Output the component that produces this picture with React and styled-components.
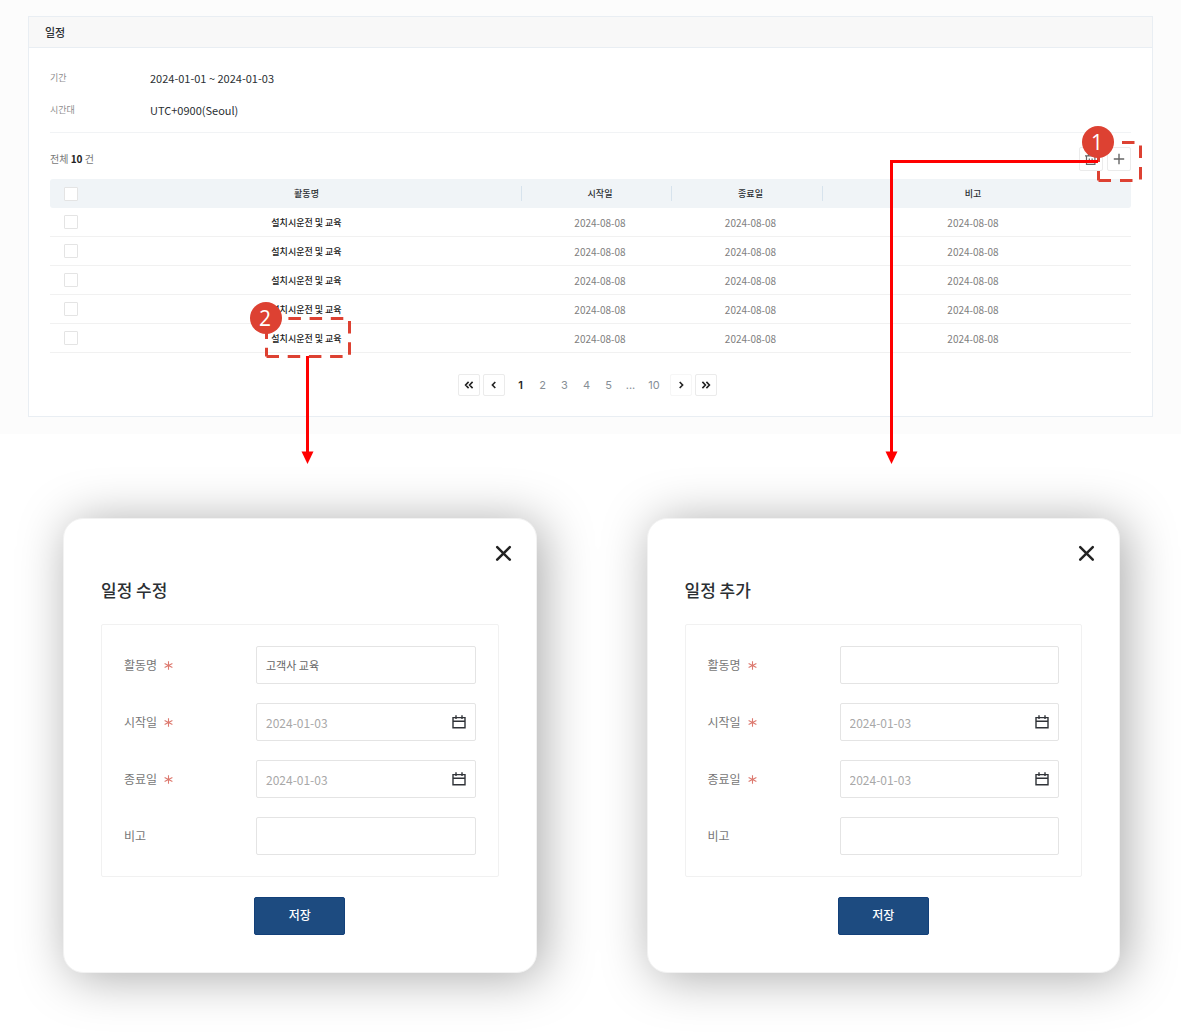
import React, { useId } from "react";
import styled, { createGlobalStyle } from "styled-components";

const GlobalStyle = createGlobalStyle`
  *, *::before, *::after { box-sizing: border-box; }
  body {
    margin: 0;
    background: #fff;
    color: #2b2f33;
    font-family: "Noto Sans CJK KR", sans-serif;
    font-size: 12px;
  }
  button, input { font: inherit; color: inherit; }
`;

const Page = styled.main`
  position: relative;
  padding-bottom: 60px;
  overflow: hidden;
`;

const Board = styled.div`
  margin-right: 5px;
  padding: 16px 28px 17px;
  background: #fcfcfc;
`;

const Panel = styled.section`
  border: 1px solid #e9eef3;
  background: #fff;
`;

const PanelTitle = styled.h1`
  margin: 0;
  padding: 0 16px;
  border-bottom: 1px solid #e9eef3;
  background: #f8f8f8;
  font-size: 11px;
  font-weight: 500;
  line-height: 30px;
`;

const PanelBody = styled.div`
  padding: 0 21px 20px;
`;

const InfoList = styled.dl`
  display: grid;
  grid-template-columns: 100px 1fr;
  margin: 0;
  padding: 14px 0 6px;
  border-bottom: 1px solid #f1f3f5;
  line-height: 32px;
`;

const InfoTerm = styled.dt`
  color: #8e8e8e;
  font-size: 9px;
`;

const InfoValue = styled.dd`
  margin: 0;
  font-size: 11px;
`;

const Toolbar = styled.div`
  display: flex;
  align-items: center;
  justify-content: space-between;
  padding: 14px 0 8px;
`;

const Total = styled.p`
  margin: 0;
  color: #777;
  font-size: 10px;
  line-height: 22px;

  strong {
    color: #222;
    font-weight: 700;
  }
`;

const ToolButtons = styled.div`
  display: flex;
  gap: 4px;
`;

const SquareButton = styled.button`
  display: flex;
  align-items: center;
  justify-content: center;
  width: ${(p) => p.$size}px;
  height: ${(p) => p.$size}px;
  padding: 0;
  border: 1px solid ${(p) => (p.$faint ? "#f6f6f6" : "#ebebeb")};
  border-radius: 2px;
  background: #fff;
  color: ${(p) => p.$color || "#222"};
`;

const Table = styled.table`
  width: 100%;
  border-collapse: separate;
  border-spacing: 0;
  table-layout: fixed;
  font-size: 10px;
  text-align: center;
`;

const HeadCell = styled.th`
  width: ${(p) => p.$width || "auto"};
  height: 29px;
  padding: 0 ${(p) => (p.$last ? "7px" : "0")} 0 ${(p) => (p.$shift ? "8px" : "0")};
  background: ${(p) =>
      p.$divided
        ? "linear-gradient(#d7e3ed, #d7e3ed) left center / 1px 15px no-repeat,"
        : ""}
    #f0f4f7;
  font-size: 9px;
  font-weight: 500;

  &:first-child { border-radius: 3px 0 0 3px; }
  &:last-child { border-radius: 0 3px 3px 0; }
`;

const Cell = styled.td`
  height: 29px;
  padding: 0 ${(p) => (p.$last ? "7px" : "0")} 0 ${(p) => (p.$shift ? "8px" : "0")};
  border-bottom: 1px solid #f1f1f1;
  color: #808080;
`;

const NameCell = styled(Cell)`
  color: #222;
  font-size: 9px;
  font-weight: 500;
`;

const Check = styled.input.attrs({ type: "checkbox" })`
  display: block;
  width: 14px;
  height: 14px;
  margin: 0 auto;
  border: 1px solid #e4e4e4;
  border-radius: 1px;
  background: #fff;
  appearance: none;

  &:checked { background: #1b4a80; }
`;

const Pager = styled.nav`
  display: flex;
  align-items: center;
  justify-content: center;
  gap: 3px;
  margin-top: 21px;
  padding-right: 7px;
`;

const PageNumbers = styled.div`
  display: flex;
  padding-left: 2px;
  font-family: Inter, sans-serif;
  font-size: 11px;
  color: #868e96;
`;

const PageNumber = styled.button`
  width: ${(p) => (p.$wide ? 25 : 22)}px;
  padding: 0;
  border: 0;
  background: none;
  color: ${(p) => (p.$current ? "#222" : "inherit")};
  font-weight: ${(p) => (p.$current ? 600 : 400)};
  line-height: 22px;
`;

const Ellipsis = styled.span`
  width: 22px;
  line-height: 22px;
  text-align: center;
`;

const Dialogs = styled.div`
  display: grid;
  grid-template-columns: 1fr 1fr;
  gap: 110px;
  margin-top: 84px;
  padding: 0 66px 0 63px;
`;

const Dialog = styled.section`
  display: flex;
  flex-direction: column;
  padding: 25px 37px 37px;
  border: 1px solid #f2f2f2;
  border-radius: 20px;
  background: #fff;
  box-shadow: 6px 4px 50px rgba(0, 0, 0, 0.34);
`;

const CloseButton = styled.button`
  display: flex;
  align-self: flex-end;
  margin-right: -13px;
  padding: 0;
  border: 0;
  background: none;
  color: #222;
`;

const DialogTitle = styled.h2`
  margin: 16px 0 22px;
  font-size: 17px;
  font-weight: 500;
  line-height: 24px;
`;

const Form = styled.form`
  display: flex;
  flex-direction: column;
  align-items: center;
  gap: 20px;
`;

const Fields = styled.div`
  display: grid;
  gap: 19px;
  width: 100%;
  padding: 21px 22px;
  border: 1px solid #f1f1f1;
  border-radius: 2px;
`;

const Field = styled.div`
  display: grid;
  grid-template-columns: 132px 1fr;
  align-items: center;
`;

const Label = styled.label`
  display: flex;
  align-items: center;
  gap: 7px;
  padding-bottom: 2px;
  color: #777;
  font-size: 12px;
`;

const InputBox = styled.div`
  display: flex;
  align-items: center;
  height: 38px;
  padding: 0 9px;
  border: 1px solid #e4e4e4;
  border-radius: 2px;
`;

const TextInput = styled.input`
  flex: 1;
  min-width: 0;
  height: 100%;
  padding: 0;
  border: 0;
  outline: 0;
  background: none;
  color: ${(p) => (p.$date ? "#a8a8a8" : "#666")};
  font-size: ${(p) => (p.$date ? 12 : 11)}px;
`;

const CalendarButton = styled.button`
  display: flex;
  padding: 0;
  border: 0;
  background: none;
`;

const SaveButton = styled.button`
  width: 91px;
  height: 38px;
  padding: 0 0 3px;
  border: 1px solid #134079;
  border-radius: 2px;
  background: #1d4b80;
  color: #fff;
  font-size: 12px;
  font-weight: 500;
`;

const Marker = styled.svg`
  position: absolute;
  top: ${(p) => p.$top}px;
  left: ${(p) => (p.$left === undefined ? "auto" : `${p.$left}px`)};
  right: ${(p) => (p.$right === undefined ? "auto" : `${p.$right}px`)};
  pointer-events: none;
`;

const Badge = styled.span`
  position: absolute;
  top: ${(p) => p.$top}px;
  left: ${(p) => (p.$left === undefined ? "auto" : `${p.$left}px`)};
  right: ${(p) => (p.$right === undefined ? "auto" : `${p.$right}px`)};
  width: 32px;
  height: 32px;
  padding-right: 2px;
  border-radius: 50%;
  background: #dd4132;
  color: #fff;
  font-family: "Open Sans", sans-serif;
  font-size: 21px;
  line-height: 32px;
  text-align: center;
`;

function CloseIcon() {
  return (
    <svg width="18" height="18" viewBox="0 0 18 18" fill="none" stroke="currentColor" strokeWidth="2.5" strokeLinecap="round">
      <path d="M3.2 3.1 15.8 15.7M15.8 3.1 3.2 15.7" />
    </svg>
  );
}

function CalendarIcon() {
  return (
    <svg width="14" height="15" viewBox="0 0 14 15" fill="none" stroke="#303338" strokeWidth="1.4">
      <path d="M1 2.6h12v10.2H1zM1 6.3h12M4 0.3v3.6M10 0.3v3.6" />
    </svg>
  );
}

function RequiredMark() {
  return (
    <svg width="9" height="11" viewBox="0 0 9 11" fill="none" stroke="#dd7a70" strokeWidth="1.1" aria-label="필수">
      <path d="M4.5 2.3v8.4M0.6 4.4l7.8 4.2M8.4 4.4 0.6 8.6" />
    </svg>
  );
}

function TrashIcon() {
  return (
    <svg width="14" height="14" viewBox="0 0 14 14" fill="none" stroke="currentColor" strokeWidth="1.2">
      <path d="M1 3.9h11.4M4.4 3.7V2h4.6v1.7M2.5 4v8.4h8.4V4M5.3 6.4v3.4M8.1 6.4v3.4" />
    </svg>
  );
}

function PlusIcon() {
  return (
    <svg width="12" height="12" viewBox="0 0 12 12" fill="none" stroke="currentColor" strokeWidth="1.4">
      <path d="M6 0.8v10.4M0.8 6h10.4" />
    </svg>
  );
}

function Chevron({ direction, double }) {
  const shapes = double ? "M4.6 1.9 1.6 5l3 3.1M8.6 1.9 5.6 5l3 3.1" : "M6.3 2 3.4 5l2.9 3";
  return (
    <svg width="10" height="10" viewBox="0 0 10 10" fill="none" stroke="currentColor" strokeWidth="1.6">
      <path d={shapes} transform={direction === "next" ? "matrix(-1 0 0 1 10 0)" : undefined} />
    </svg>
  );
}

const activities = Array.from({ length: 5 }, (_, id) => ({
  id,
  name: "설치시운전 및 교육",
  start: "2024-08-08",
  end: "2024-08-08",
  note: "2024-08-08",
}));

function ActivityTable() {
  return (
    <Table>
      <thead>
        <tr>
          <HeadCell $width="42px"><Check aria-label="전체 선택" /></HeadCell>
          <HeadCell>활동명</HeadCell>
          <HeadCell $width="150px" $divided $shift>시작일</HeadCell>
          <HeadCell $width="151px" $divided $shift>종료일</HeadCell>
          <HeadCell $width="309px" $divided $last>비고</HeadCell>
        </tr>
      </thead>
      <tbody>
        {activities.map((a) => (
          <tr key={a.id}>
            <Cell><Check aria-label={a.name} /></Cell>
            <NameCell>{a.name}</NameCell>
            <Cell $shift>{a.start}</Cell>
            <Cell $shift>{a.end}</Cell>
            <Cell $last>{a.note}</Cell>
          </tr>
        ))}
      </tbody>
    </Table>
  );
}

function Pagination() {
  return (
    <Pager aria-label="페이지">
      <SquareButton $size={22} aria-label="처음"><Chevron double /></SquareButton>
      <SquareButton $size={22} aria-label="이전"><Chevron /></SquareButton>
      <PageNumbers>
        {[1, 2, 3, 4, 5].map((n) => (
          <PageNumber key={n} $current={n === 1}>{n}</PageNumber>
        ))}
        <Ellipsis>...</Ellipsis>
        <PageNumber $wide>10</PageNumber>
      </PageNumbers>
      <SquareButton $size={22} $faint aria-label="다음"><Chevron direction="next" /></SquareButton>
      <SquareButton $size={22} aria-label="마지막"><Chevron direction="next" double /></SquareButton>
    </Pager>
  );
}

function FormField({ label, required, date, value = "" }) {
  const id = useId();
  return (
    <Field>
      <Label htmlFor={id}>
        {label}
        {required && <RequiredMark />}
      </Label>
      <InputBox>
        <TextInput id={id} type="text" defaultValue={value} $date={date} />
        {date && (
          <CalendarButton type="button" aria-label={`${label} 선택`}>
            <CalendarIcon />
          </CalendarButton>
        )}
      </InputBox>
    </Field>
  );
}

function ScheduleDialog({ title, name }) {
  const titleId = useId();
  return (
    <Dialog role="dialog" aria-labelledby={titleId}>
      <CloseButton type="button" aria-label="닫기"><CloseIcon /></CloseButton>
      <DialogTitle id={titleId}>{title}</DialogTitle>
      <Form onSubmit={(e) => e.preventDefault()}>
        <Fields>
          <FormField label="활동명" required value={name} />
          <FormField label="시작일" required date value="2024-01-03" />
          <FormField label="종료일" required date value="2024-01-03" />
          <FormField label="비고" />
        </Fields>
        <SaveButton>저장</SaveButton>
      </Form>
    </Dialog>
  );
}

function Annotations() {
  return (
    <>
      <Marker $top={140} $right={43} width="46" height="44" viewBox="0 0 46 44" fill="none" stroke="#dd4132" strokeWidth="3">
        <path d="M1.5 40.5h42v-38h-42v38" strokeDasharray="12.5 9" />
      </Marker>
      <Marker $top={317} $left={265} width="86" height="42" viewBox="0 0 86 42" fill="none" stroke="#dd4132" strokeWidth="3">
        <path d="M1.5 39.5h83v-38h-83v38" strokeDasharray="12.5 8.7" />
      </Marker>
      <Badge $top={126} $right={72}>1</Badge>
      <Badge $top={302} $left={250}>2</Badge>
      <Marker $top={159} $right={88} width="213" height="305" viewBox="0 0 213 305">
        <path d="M213 2.5H6.5V294" fill="none" stroke="#f00" strokeWidth="3" />
        <path d="M0.5 292.5h12L6.5 305z" fill="#f00" />
      </Marker>
      <Marker $top={356} $left={301} width="13" height="108" viewBox="0 0 13 108">
        <path d="M6.5 0V97" fill="none" stroke="#f00" strokeWidth="3" />
        <path d="M0.5 95.5h12L6.5 108z" fill="#f00" />
      </Marker>
    </>
  );
}

export default function App() {
  return (
    <>
      <GlobalStyle />
      <Page>
        <Board>
          <Panel>
            <PanelTitle>일정</PanelTitle>
            <PanelBody>
              <InfoList>
                <InfoTerm>기간</InfoTerm>
                <InfoValue>2024-01-01 ~ 2024-01-03</InfoValue>
                <InfoTerm>시간대</InfoTerm>
                <InfoValue>UTC+0900(Seoul)</InfoValue>
              </InfoList>
              <Toolbar>
                <Total>전체 <strong>10</strong> 건</Total>
                <ToolButtons>
                  <SquareButton $size={24} $color="#666" aria-label="삭제"><TrashIcon /></SquareButton>
                  <SquareButton $size={24} $color="#666" aria-label="추가"><PlusIcon /></SquareButton>
                </ToolButtons>
              </Toolbar>
              <ActivityTable />
              <Pagination />
            </PanelBody>
          </Panel>
        </Board>
        <Dialogs>
          <ScheduleDialog title="일정 수정" name="고객사 교육" />
          <ScheduleDialog title="일정 추가" />
        </Dialogs>
        <Annotations />
      </Page>
    </>
  );
}
